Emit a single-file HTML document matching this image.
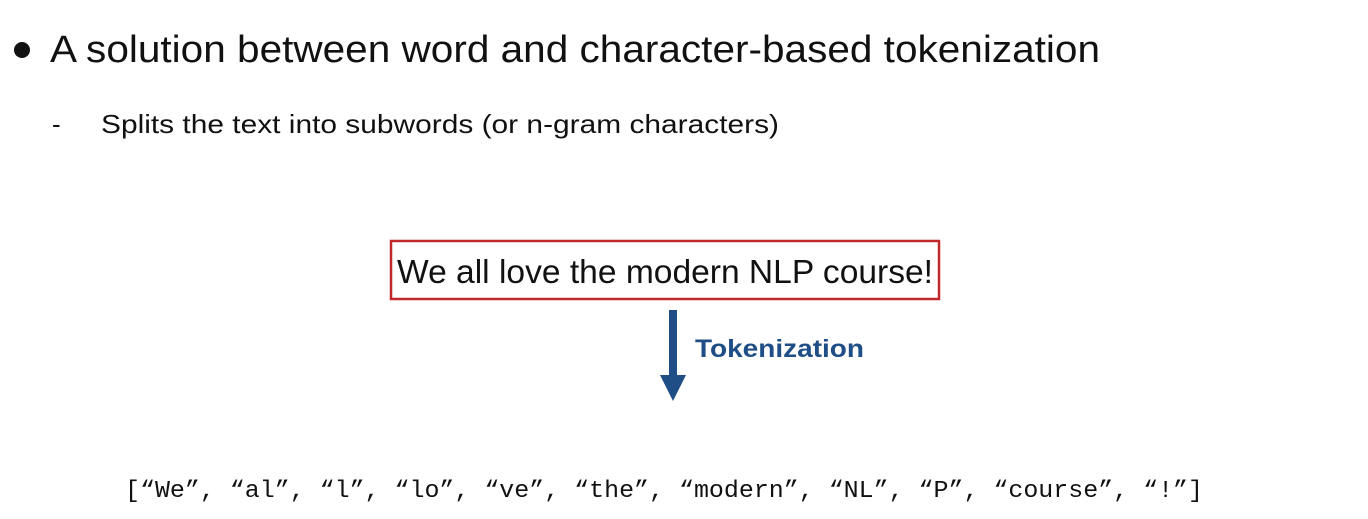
<!DOCTYPE html>
<html><head><meta charset="utf-8"><style>
html,body{margin:0;padding:0;background:#fff;width:1368px;height:519px;overflow:hidden}
</style></head><body>
<svg width="1368" height="519" xmlns="http://www.w3.org/2000/svg">
<circle cx="22" cy="50" r="8" fill="#111"/>
<text x="50" y="62" font-family="Liberation Sans, sans-serif" font-size="38" fill="#111" textLength="1050" lengthAdjust="spacingAndGlyphs">A solution between word and character-based tokenization</text>
<text x="52" y="133" font-family="Liberation Sans, sans-serif" font-size="26" fill="#111">-</text>
<text x="101" y="133" font-family="Liberation Sans, sans-serif" font-size="26" fill="#111" textLength="678" lengthAdjust="spacingAndGlyphs">Splits the text into subwords (or n-gram characters)</text>
<rect x="391" y="241" width="548" height="58" fill="#fff" stroke="#c0282b" stroke-width="2.5"/>
<text x="397" y="283" font-family="Liberation Sans, sans-serif" font-size="33" fill="#111" textLength="536" lengthAdjust="spacingAndGlyphs">We all love the modern NLP course!</text>
<rect x="669" y="310" width="8" height="66" fill="#1e4e85"/>
<polygon points="660,375 686,375 673,401" fill="#1e4e85"/>
<text x="695" y="357" font-family="Liberation Sans, sans-serif" font-weight="bold" font-size="25" fill="#1e4e85" textLength="169" lengthAdjust="spacingAndGlyphs">Tokenization</text>
<text x="125" y="497" font-family="Liberation Mono, monospace" font-size="24" fill="#111" textLength="1078" lengthAdjust="spacingAndGlyphs">[“We”, “al”, “l”, “lo”, “ve”, “the”, “modern”, “NL”, “P”, “course”, “!”]</text>
</svg>
</body></html>
